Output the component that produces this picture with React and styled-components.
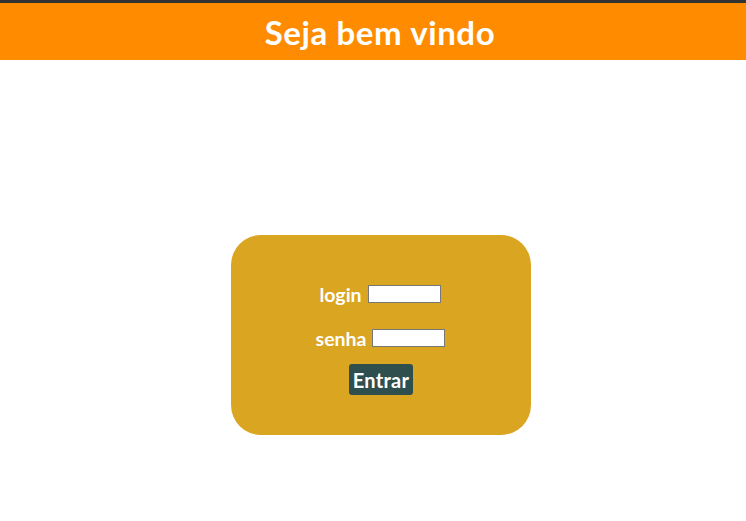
import React from "react";
import styled, { createGlobalStyle } from "styled-components";

const Global = createGlobalStyle`
  html, body { margin: 0; padding: 0; background: #fff; }
  body { font-family: "Lato", "Open Sans", sans-serif; }
`;

const Header = styled.header`
  height: 57px;
  background: #ff8c00;
  border-top: 3px solid #333;
  display: flex;
  align-items: center;
  justify-content: center;
  padding-left: 14px;
`;

const Title = styled.h1`
  margin: 0;
  color: #fff;
  font-size: 33px;
  font-weight: 700;
  letter-spacing: 0.6px;
`;

const Main = styled.main`
  display: flex;
  justify-content: center;
  padding: 175px 0 0 16px;
`;

const Card = styled.form`
  width: 300px;
  height: 200px;
  box-sizing: border-box;
  background: #daa520;
  border-radius: 30px;
  display: flex;
  flex-direction: column;
  align-items: center;
  padding-top: 46px;
`;

const Row = styled.label`
  display: flex;
  align-items: center;
  gap: 6px;
  color: #fff;
  font-size: 19.5px;
  font-weight: 700;
  height: 26px;
  margin-bottom: ${(p) => p.$mb || 0}px;
  margin-left: ${(p) => p.$ml || 0}px;
`;

const Input = styled.input`
  width: 73px;
  height: 18px;
  box-sizing: border-box;
  border: 1px solid #777;
  padding: 0;
  background: #fff;
`;

const Button = styled.button`
  margin-top: 13px;
  height: 31px;
  padding: 0 4px;
  background: #2f4f4f;
  color: #fff;
  border: none;
  border-radius: 3px;
  font-family: inherit;
  font-size: 20px;
  font-weight: 700;
  letter-spacing: 0.3px;
`;

export default function App() {
  return (
    <>
      <Global />
      <Header>
        <Title>Seja bem vindo</Title>
      </Header>
      <Main>
        <Card onSubmit={(e) => e.preventDefault()}>
          <Row $mb={18} $ml={-2}>
            login <Input type="text" />
          </Row>
          <Row $ml={-1}>
            senha <Input type="password" />
          </Row>
          <Button type="submit">Entrar</Button>
        </Card>
      </Main>
    </>
  );
}
